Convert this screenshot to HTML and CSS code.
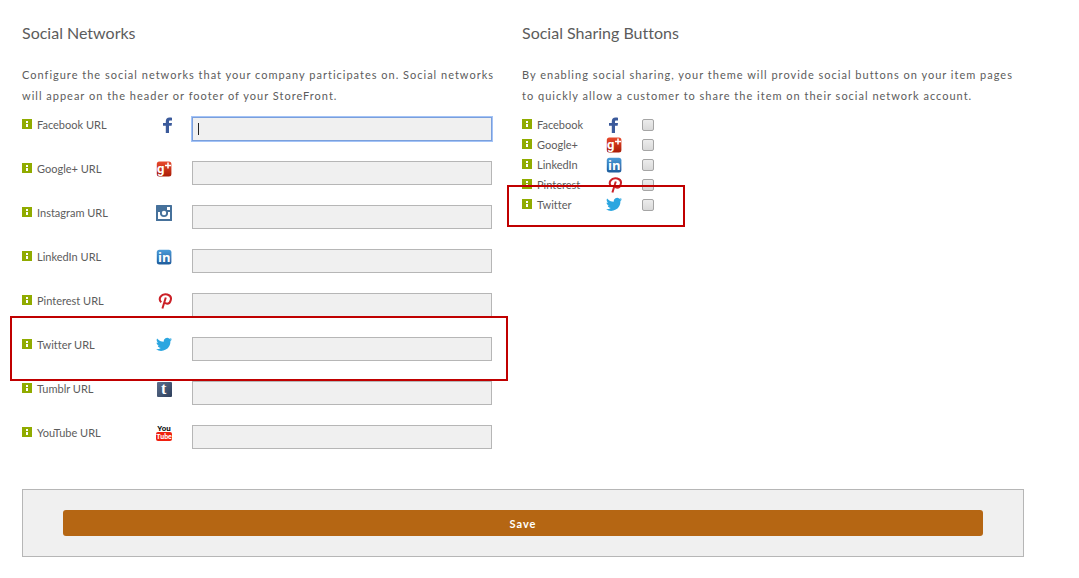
FILE: index.html
```html
<!DOCTYPE html>
<html lang="en">
  <head>
    <meta charset="UTF-8" />
    <meta name="viewport" content="width=device-width, initial-scale=1.0" />
    <title>Social Settings</title>
    <link rel="stylesheet" href="styles.css">
  </head>
  <body>
    <!-- Shared icons -->
    <svg class="sprite" aria-hidden="true">
      <defs>
        <linearGradient id="gp" x1="0" y1="0" x2="0" y2="1">
          <stop offset="0" stop-color="#e8492c" />
          <stop offset="1" stop-color="#a81c06" />
        </linearGradient>
        <linearGradient id="li" x1="0" y1="0" x2="0" y2="1">
          <stop offset="0" stop-color="#4c9bd8" />
          <stop offset="1" stop-color="#1d5c9c" />
        </linearGradient>
        <linearGradient id="tu" x1="0" y1="0" x2="1" y2="1">
          <stop offset="0" stop-color="#5c6e8c" />
          <stop offset="1" stop-color="#2e3f5c" />
        </linearGradient>
        <path id="fb" d="M16 .7v2.700h-1.700c-1 0-1.300.4-1.300 1.200V6h3l-.4 2.700H13V16H9.800V8.700H7V6h2.800V4.200C9.800 1.800 11.100.400 13.500.400c1 0 1.900.1 2.500.3z" fill="#3b5a9b" />
      </defs>
      <symbol id="info" viewBox="0 0 10 10">
        <rect width="10" height="10" fill="#90ab00" />
        <rect x="4" y="2" width="2" height="2" fill="#fff" />
        <rect x="4" y="5" width="2" height="3" fill="#fff" />
      </symbol>
      <symbol id="facebook" viewBox="0 0 16 16">
        <use href="#fb" />
      </symbol>
      <symbol id="facebook-center" viewBox="4 0 16 16">
        <use href="#fb" />
      </symbol>
      <symbol id="instagram" viewBox="0 0 16 16">
        <rect width="16" height="16" rx=".5" fill="#46719b" />
        <path d="M2 7h2a4 4 0 1 0 8 0h2v7H2z" fill="#fff" />
        <circle cx="8" cy="8" r="4" fill="#46719b" />
        <circle cx="8" cy="8" r="2.200" fill="#fff" />
        <rect x="11" y="2" width="3" height="3" fill="#fff" />
      </symbol>
      <symbol id="pinterest" viewBox="0 0 16 16">
        <path d="M5.300 9.300C3.700 7.800 3.400 5.400 4.600 3.600 6 1.600 8.900.900 11.300 1.500c2.900.8 4.100 3 3.500 5.400-.6 2.500-2.400 4-4.400 3.700-1.300-.2-2-.8-2.200-1.500M9.800 4.500L6.400 15.500" fill="none" stroke="#cb2027" stroke-width="2" />
      </symbol>
      <symbol id="twitter" viewBox="0 1 16 16">
        <path d="M16 3.300c-.6.3-1.200.4-1.900.5.700-.4 1.200-1 1.400-1.800-.6.400-1.300.6-2.100.8A3.300 3.300 0 0 0 7.800 5.800C5.100 5.700 2.700 4.400 1.100 2.400c-.9 1.500-.4 3.400 1 4.400-.5 0-1-.2-1.500-.4 0 1.600 1.100 2.900 2.600 3.200-.5.1-1 .2-1.500.1.400 1.300 1.600 2.200 3.100 2.300A6.600 6.600 0 0 1 0 13.300 9.300 9.300 0 0 0 14.400 5c.6-.5 1.200-1 1.600-1.700z" fill="#2ca6e0" />
      </symbol>
    </svg>

    <form class="settings">
      <div class="columns">
        <section class="column networks">
          <h2 class="title">Social Networks</h2>
          <p class="description">Configure the social networks that your company participates on. Social networks will appear on the header or footer of your StoreFront.</p>

          <div class="url-row">
            <svg class="info"><use href="#info" /></svg>
            <label class="label" for="facebookUrl">Facebook URL</label>
            <svg class="icon"><use href="#facebook" /></svg>
            <input class="url-input active" type="text" id="facebookUrl" />
          </div>
          <div class="url-row">
            <svg class="info"><use href="#info" /></svg>
            <label class="label" for="googleUrl">Google+ URL</label>
            <svg class="icon" viewBox="0 0 16 16">
              <rect x=".8" y=".6" width="14.600" height="15" rx="2.500" fill="url(#gp)" />
              <text x="1" y="12" class="glyph glyph-google">g</text>
              <path d="M12 1.500v6M9 4.500h6" stroke="#fff" stroke-width="1.500" />
            </svg>
            <input class="url-input" type="text" id="googleUrl" />
          </div>
          <div class="url-row">
            <svg class="info"><use href="#info" /></svg>
            <label class="label" for="instagramUrl">Instagram URL</label>
            <svg class="icon"><use href="#instagram" /></svg>
            <input class="url-input" type="text" id="instagramUrl" />
          </div>
          <div class="url-row">
            <svg class="info"><use href="#info" /></svg>
            <label class="label" for="linkedinUrl">LinkedIn URL</label>
            <svg class="icon" viewBox="0 0 16 16">
              <rect x=".8" y=".8" width="14.600" height="14.600" rx="2.500" fill="url(#li)" />
              <text x="2" y="13" class="glyph glyph-linkedin">in</text>
            </svg>
            <input class="url-input" type="text" id="linkedinUrl" />
          </div>
          <div class="url-row">
            <svg class="info"><use href="#info" /></svg>
            <label class="label" for="pinterestUrl">Pinterest URL</label>
            <svg class="icon"><use href="#pinterest" /></svg>
            <input class="url-input" type="text" id="pinterestUrl" />
          </div>
          <div class="url-row marked">
            <svg class="info"><use href="#info" /></svg>
            <label class="label" for="twitterUrl">Twitter URL</label>
            <svg class="icon"><use href="#twitter" /></svg>
            <input class="url-input" type="text" id="twitterUrl" />
          </div>
          <div class="url-row">
            <svg class="info"><use href="#info" /></svg>
            <label class="label" for="tumblrUrl">Tumblr URL</label>
            <svg class="icon" viewBox="0 0 16 16">
              <rect x="1" y="1" width="15" height="15" rx="1" fill="url(#tu)" />
              <text x="5" y="13" class="glyph glyph-tumblr">t</text>
            </svg>
            <input class="url-input" type="text" id="tumblrUrl" />
          </div>
          <div class="url-row">
            <svg class="info"><use href="#info" /></svg>
            <label class="label" for="youtubeUrl">YouTube URL</label>
            <svg class="icon" viewBox="0 0 16 16">
              <text x="8" y="6" class="glyph glyph-you">You</text>
              <rect y="7" width="16" height="9" rx="2" fill="#f0200f" />
              <text x="8" y="14" class="glyph glyph-tube">Tube</text>
            </svg>
            <input class="url-input" type="text" id="youtubeUrl" />
          </div>
        </section>

        <section class="column sharing">
          <h2 class="title">Social Sharing Buttons</h2>
          <p class="description">By enabling social sharing, your theme will provide social buttons on your item pages to quickly allow a customer to share the item on their social network account.</p>

          <div class="share-row">
            <svg class="info"><use href="#info" /></svg>
            <label class="label" for="shareFacebook">Facebook</label>
            <svg class="icon"><use href="#facebook-center" /></svg>
            <input class="check" type="checkbox" id="shareFacebook" />
          </div>
          <div class="share-row">
            <svg class="info"><use href="#info" /></svg>
            <label class="label" for="shareGoogle">Google+</label>
            <svg class="icon" viewBox="0 0 16 16">
              <rect x=".8" y=".6" width="14.600" height="15" rx="2.500" fill="url(#gp)" />
              <text x="1" y="12" class="glyph glyph-google">g</text>
              <path d="M12 1.500v6M9 4.500h6" stroke="#fff" stroke-width="1.500" />
            </svg>
            <input class="check" type="checkbox" id="shareGoogle" />
          </div>
          <div class="share-row">
            <svg class="info"><use href="#info" /></svg>
            <label class="label" for="shareLinkedin">LinkedIn</label>
            <svg class="icon" viewBox="0 0 16 16">
              <rect x=".8" y=".8" width="14.600" height="14.600" rx="2.500" fill="url(#li)" />
              <text x="2" y="13" class="glyph glyph-linkedin">in</text>
            </svg>
            <input class="check" type="checkbox" id="shareLinkedin" />
          </div>
          <div class="share-row">
            <svg class="info"><use href="#info" /></svg>
            <label class="label" for="sharePinterest">Pinterest</label>
            <svg class="icon"><use href="#pinterest" /></svg>
            <input class="check" type="checkbox" id="sharePinterest" />
          </div>
          <div class="share-row marked">
            <svg class="info"><use href="#info" /></svg>
            <label class="label" for="shareTwitter">Twitter</label>
            <svg class="icon"><use href="#twitter" /></svg>
            <input class="check" type="checkbox" id="shareTwitter" />
          </div>
        </section>
      </div>

      <div class="actions">
        <button type="button" class="btn-save">Save</button>
      </div>
    </form>
  </body>
</html>
```
FILE: styles.css
```css
*,
*::after {
  margin: 0;
  padding: 0;
  box-sizing: border-box;
}

body {
  font-family: Lato, "Open Sans", sans-serif;
  font-size: 11px;
  font-variant-ligatures: none;
  color: #5c5c5c;
  background: #fff;
}

.sprite {
  position: absolute;
  width: 0;
  height: 0;
}

.settings {
  padding: 22px 55px 20px 22px;
}

.columns {
  display: grid;
  grid-template-columns: 1fr 1fr;
  margin-right: 2px;
}

.networks {
  padding-right: 20px;
}

.title {
  font-size: 16px;
  font-weight: 400;
  line-height: 22px;
  margin-bottom: 20px;
}

.description {
  line-height: 21px;
  letter-spacing: 1px;
  margin-bottom: 11px;
}

.url-row,
.share-row {
  display: flex;
  align-items: flex-start;
  position: relative;
}

.url-row {
  height: 44px;
  max-width: 470px;
}

.share-row {
  height: 20px;
}

.info {
  width: 10px;
  height: 10px;
  margin-top: 2px;
  margin-right: 5px;
}

.label {
  line-height: 16px;
}

.url-row .label {
  width: 119px;
}

.share-row .label {
  width: 69px;
}

.icon {
  width: 16px;
  height: 16px;
  margin-right: 20px;
}

.url-input {
  flex: 1;
  min-width: 0;
  height: 24px;
  padding: 0 6px;
  border: 1px solid #b6b6b6;
  background: #f0f0f0;
  font: inherit;
}

.url-input.active {
  border-color: #7a9fdc;
  outline: 1px solid #a3c3f7;
  caret-color: transparent;
  background: linear-gradient(#222, #222) 5px 5px / 1px 12px no-repeat #f0f0f0;
}

.check {
  appearance: none;
  width: 12px;
  height: 12px;
  margin-top: 2px;
  border: 1px solid #a5a5a5;
  border-radius: 2px;
  background: linear-gradient(#ececec, #d9d9d9);
}

/* red frame around the Twitter settings */
.marked::after {
  content: "";
  position: absolute;
  z-index: 1;
  border: 2px solid #c00000;
  pointer-events: none;
}

.url-row.marked::after {
  top: -21px;
  left: -12px;
  right: -16px;
  height: 65px;
}

.share-row.marked::after {
  top: -12px;
  left: -15px;
  width: 178px;
  height: 42px;
}

.actions {
  margin-top: 20px;
  padding: 20px 40px;
  border: 1px solid #b6b6b6;
  background: #f0f0f0;
}

.btn-save {
  display: block;
  width: 100%;
  height: 26px;
  border: none;
  border-radius: 3px;
  background: #b56613;
  color: #fff;
  font-family: inherit;
  font-size: 11px;
  font-weight: 700;
  letter-spacing: 1px;
  cursor: pointer;
}

/* icon lettering */
.glyph {
  font-weight: 700;
  fill: #fff;
}

.glyph-google {
  font-family: Roboto, sans-serif;
  font-size: 13px;
}

.glyph-linkedin {
  font-family: "Open Sans", sans-serif;
  font-size: 13px;
}

.glyph-tumblr {
  font-family: "Liberation Serif", serif;
  font-size: 16px;
}

.glyph-you,
.glyph-tube {
  font-family: "Liberation Sans Narrow", Roboto, sans-serif;
  font-size: 8px;
  text-anchor: middle;
}

.glyph-you {
  fill: #111;
}

.glyph-tube {
  font-size: 7px;
}
```
